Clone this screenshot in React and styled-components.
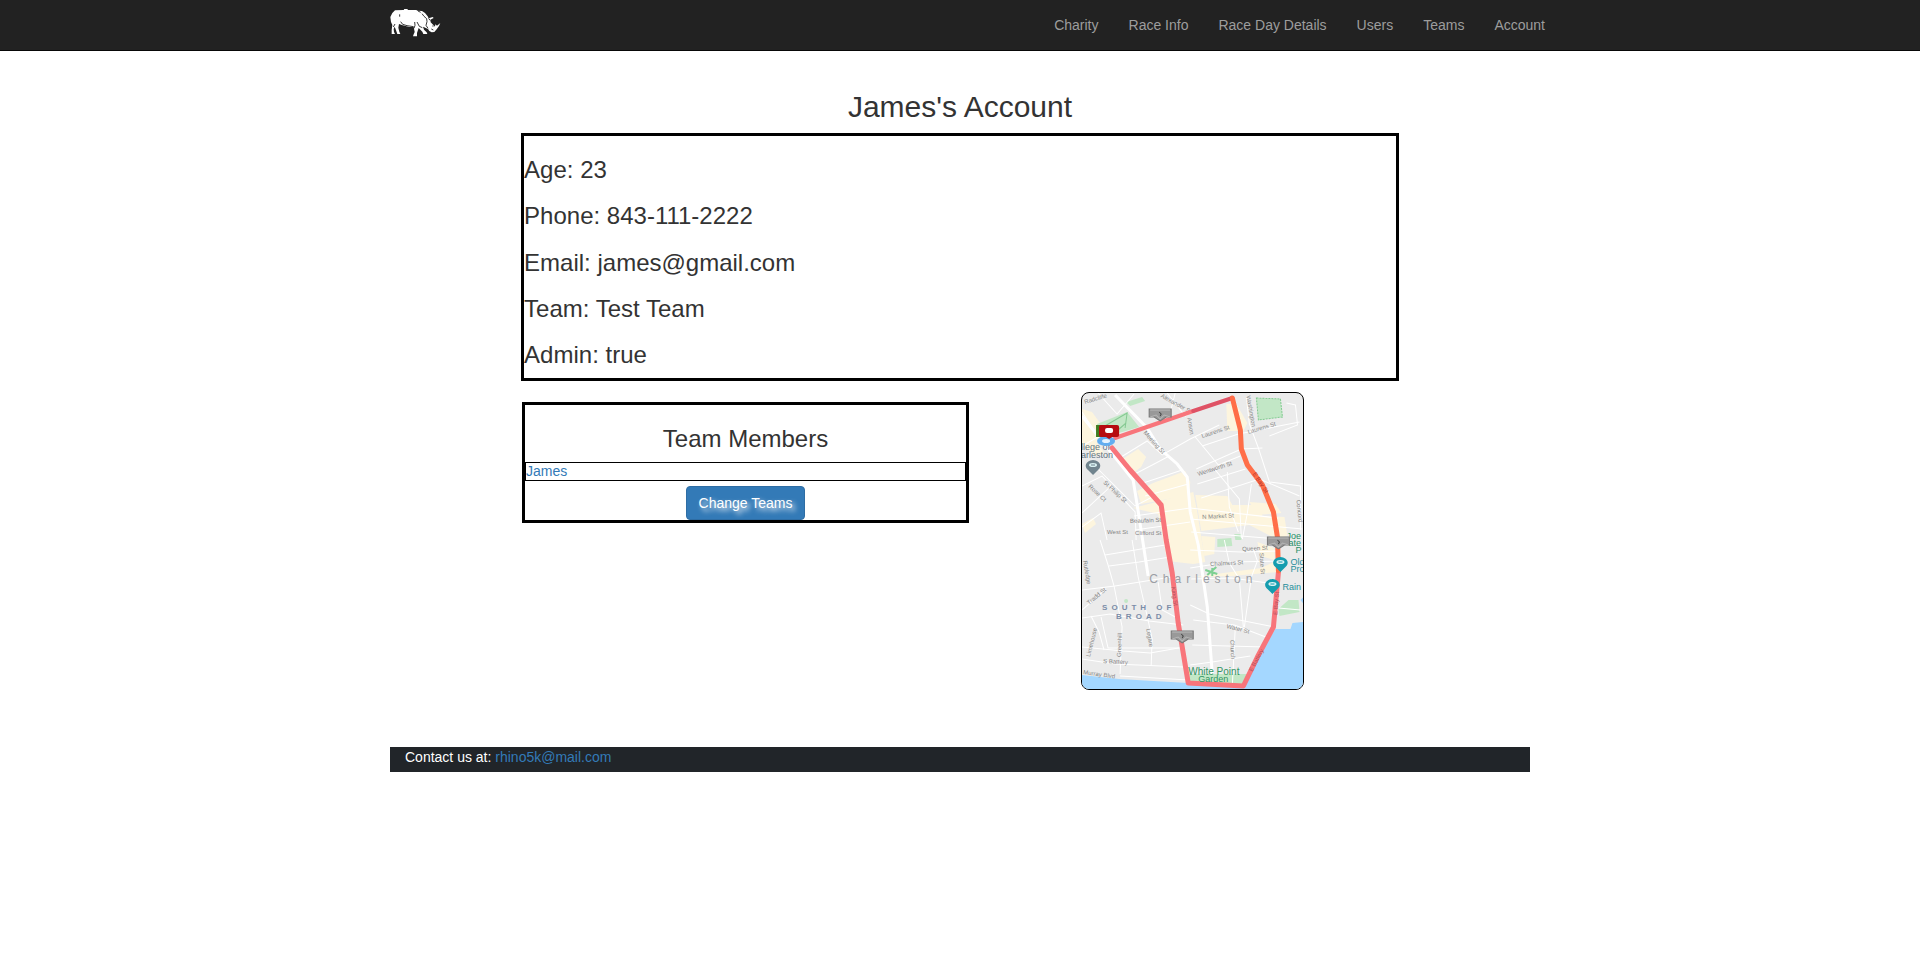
import React from "react";
import styled, { createGlobalStyle } from "styled-components";

const GlobalStyle = createGlobalStyle`
  *, *::before, *::after { box-sizing: border-box; }
  body {
    margin: 0;
    background: #fff;
    color: #333;
    font-family: "Helvetica Neue", "Liberation Sans", Arial, sans-serif;
    font-size: 14px;
    line-height: 20px;
  }
  a { color: #337ab7; text-decoration: none; }
  a:hover { text-decoration: underline; }
`;

const NavBar = styled.header`
  background: #222;
  border-bottom: 1px solid #080808;
`;

const Container = styled.div`
  max-width: 1170px;
  margin: 0 auto;
  padding: 0 15px;
`;

const NavInner = styled(Container)`
  display: flex;
  justify-content: space-between;
  align-items: flex-start;
`;

const Brand = styled.a`
  display: block;
  padding-top: 8px;
  svg { display: block; width: 51px; height: 30px; }
`;

const NavLinks = styled.nav`
  display: flex;
  margin-right: -30px;
`;

const NavLink = styled.a`
  padding: 15px;
  color: #9d9d9d;
  &:hover { color: #fff; text-decoration: none; }
`;

const Main = styled.main`
  padding-top: 39px;
`;

const PageTitle = styled.h1`
  margin: 0 0 10px;
  font-size: 30px;
  font-weight: 500;
  line-height: 33px;
  text-align: center;
`;

const Panel = styled.section`
  border: 3px solid #000;
`;

const DetailsPanel = styled(Panel)`
  display: flex;
  flex-direction: column;
  justify-content: space-between;
  width: 77%;
  min-height: 248px;
  margin: 0 auto;
  padding: 20px 0 10px;
`;

const Detail = styled.p`
  margin: 0;
  font-size: 24px;
  line-height: 27px;
`;

const Columns = styled.div`
  display: grid;
  grid-template-columns: repeat(2, minmax(0, 447px));
  align-items: start;
  margin: 11px 0 0 132px;
`;

const TeamPanel = styled(Panel)`
  display: flex;
  flex-direction: column;
  margin-top: 10px;
  padding-top: 20px;
`;

const PanelTitle = styled.h2`
  margin: 0 0 10px;
  font-size: 24px;
  font-weight: 500;
  line-height: 27px;
  text-align: center;
`;

const MemberList = styled.ul`
  margin: 0 0 5px;
  padding: 0;
  list-style: none;
`;

const Member = styled.li`
  border: 1px solid #000;
  line-height: 17px;
`;

const PrimaryButton = styled.button`
  align-self: center;
  padding: 6px 12px;
  border: 1px solid #2e6da4;
  border-radius: 4px;
  background: #337ab7;
  color: #fff;
  font: inherit;
  text-shadow: 3px 3px 5px #fff;
  cursor: pointer;
`;

const MapFrame = styled.svg`
  display: block;
  justify-self: center;
  width: 50%;
  aspect-ratio: 3 / 4;
  border: 1px solid #000;
  border-radius: 8px;
  background: #ebebeb;
`;

const StreetLabel = styled.text`
  fill: ${(p) => p.$color || "#858585"};
  font-size: 6px;
`;

const PlaceLabel = styled.text`
  fill: ${(p) => p.$color};
  font-size: ${(p) => p.$size}px;
  font-weight: ${(p) => (p.$bold ? 700 : 400)};
  letter-spacing: ${(p) => p.$tracking || 0}px;
`;

const Footer = styled.footer`
  margin-top: 57px;
  padding: 0 15px 5px;
  background: #212529;
  color: #fff;
`;

function Rhino() {
  return (
    <svg viewBox="29 24 153 90" role="img" aria-label="Rhino 5K">
      <path
        fill="#fff"
        d="M30 51L36 39L44 31L70 30L72 27H81L83 30H108L111 32L125 33L134 39L142 49L145 55L157 51L160 54L150 59L151 67L159 75L164 80L165 73L170 77L180 69L176 78L169 88L162 96L154 97L147 93L143 87L138 85L128 80L131 89L139 97L141 102H129L126 95L115 84L110 99L110 109H98L100 103L103 96L100 81L87 81L67 76L56 72L54 83L57 95L60 102H51L47 91L43 80L40 87L41 96L44 102H34V90L36 75L32 66Z"
      />
      <g fill="none" stroke="#111" strokeWidth="2.5">
        <path d="M58 43V50M61 65L67 73L80 77L100 80" />
        <path d="M103 66L104 76L101 85M110 66L117 79L126 83" />
        <path d="M125 41L131 49L139 56L140 65L137 76L143 85" />
        <path d="M145 55L149 61M156 78H160M153 87L159 90M44 72L39 81M113 33L121 37" />
      </g>
    </svg>
  );
}

const minorStreets = [
  "M1 54L15 46L34 39", "M1 20L17 44L26 53", "M17 1L36 22L53 2", "M40 65L66 49L81 63L109 47L138 33",
  "M66 36L88 25L94 1", "M86 1L104 24L114 18", "M1 94L21 84L54 120L55 148", "M14 74L54 114L73 104",
  "M50 84L73 72L88 64", "M59 92L101 78", "M64 104L107 92", "M1 135L20 121L26 148", "M1 121L30 94",
  "M53 124L109 116", "M54 138L109 130", "M114 45L137 73L159 64", "M121 54L157 42L218 30",
  "M115 77L160 57L181 56", "M116 92L164 77", "M120 106L178 87L218 104", "M109 116L196 126",
  "M109 127L221 137", "M110 140L196 147", "M146 80L148 115L157 140", "M134 78L158 107L160 146",
  "M170 92L166 121L161 147", "M165 5L168 32L177 56L188 90L219 94V138", "M188 44L216 33L214 13L205 11",
  "M19 148L27 173L33 194L41 235L39 282", "M51 148L57 185L66 224L71 247L70 274",
  "M24 163L54 158L84 153", "M28 174L58 170L89 165", "M1 198L34 194L90 185",
  "M1 218L25 197", "M1 226L29 222L68 229L102 233", "M10 224L18 240L23 258", "M20 225L27 256L98 256",
  "M1 255L42 259L69 261L103 255", "M1 267L34 272L103 275", "M39 284L107 288",
  "M77 190L81 218L96 226", "M109 158L160 160L196 159", "M109 176L147 170L197 169",
  "M110 187L150 186L194 192", "M143 148L148 171L158 187L162 235", "M172 157L176 169L170 185L163 235",
  "M112 228L153 233L187 246", "M111 253L183 255", "M109 213L128 222L193 235",
  "M154 234L151 294", "M109 273L131 270L169 264", "M197 216L219 218",
];

const avenues = [
  "M34 3L66 36L79 57L96 72L106 85L109 120L117 153L126 215L131 282",
  "M1 24L17 44L52 88L57 119L67 184",
];

const commercial = [
  "M1 17L11 20L27 42L16 51L24 62L14 64L1 53Z",
  "M40 68L57 57L65 65L60 75L48 84Z",
  "M56 99L72 91L104 79L109 90L108 103L60 112Z",
  "M52 116L79 109L112 100L116 120L124 170L112 172L86 169L77 122Z",
  "M1 132L12 126L15 132L4 141Z",
  "M145 12H155L166 31L162 39H146Z",
  "M114 103L146 104L151 113L178 113L181 124L203 125L206 144L195 147L168 133L120 139Z",
  "M120 144L134 145L133 162L123 164Z",
  "M112 185L180 176L196 168V180L150 184Z",
  "M176 150L193 156V168L179 164Z",
  "M168 110L194 112L200 121L176 123Z",
];

function Shield({ x, y }) {
  return (
    <g transform={`translate(${x} ${y})`}>
      <path d="M-11 -5H11V3H6L0 7L-6 3H-11Z" fill="#999" stroke="#777" />
      <path d="M-10 -4H10" stroke="#bbb" />
      <path d="M-10 3L-4 1L0 5L4 1L10 3" fill="none" stroke="#b5b5b5" />
      <path d="M-1 -2L1 0L0 2" fill="none" stroke="#444" />
    </g>
  );
}

function Pin({ x, y, color }) {
  return (
    <g transform={`translate(${x} ${y})`}>
      <path d="M0 9L-5 4C-9 1 -8 -5 0 -6C8 -5 9 1 5 4Z" fill={color} />
      <ellipse cy="-1" rx="4" ry="2" fill="#d9f1f2" />
      <path d="M-2 -1H2" stroke={color} />
    </g>
  );
}

function RaceMap() {
  return (
    <MapFrame viewBox="1 1 221 296" preserveAspectRatio="none" role="img" aria-label="Race route through Charleston">
      <g fill="#fdf5de">{commercial.map((d) => <path key={d} d={d} />)}</g>
      <path d="M1 283L38 287L107 291L162 294L176 265L194 237H209L211 231L222 230V298H1Z" fill="#a4d7ff" />
      <path d="M222 205L219 208L222 212Z" fill="#a4d7ff" />
      <g fill="#c2e7c6">
        <path d="M16 32L46 20L58 35L31 43L17 43Z" />
        <path d="M45 10L61 5L64 9L49 14Z" />
        <path d="M175 6L199 7L201 25L177 28Z" stroke="#82ca91" strokeDasharray="2 1" />
        <path d="M136 147L150 146L151 154L136 155Z" />
        <path d="M153 142L160 142V148L154 148Z" />
        <path d="M207 208L217 208L218 220L198 224L197 217Z" />
        <path d="M108 282H166L163 293L107 290Z" />
        <circle cx="45" cy="209" r="2" />
      </g>
      <path d="M17 38L46 21L44 36M31 43L45 31" fill="none" stroke="#85c992" />
      <g fill="none" stroke="#fff">{minorStreets.map((d) => <path key={d} d={d} />)}</g>
      <g fill="none" stroke="#fff" strokeWidth="3">{avenues.map((d) => <path key={d} d={d} />)}</g>
      <path d="M124 178L136 182M126 183L135 175M131 176V184" stroke="#7fd093" strokeWidth="2" />

      <StreetLabel transform="translate(4 12) rotate(-17)">Radcliffe</StreetLabel>
      <StreetLabel transform="translate(79 5) rotate(29)">Alexander St</StreetLabel>
      <StreetLabel transform="translate(62 41) rotate(48)">Meeting St</StreetLabel>
      <StreetLabel transform="translate(22 91) rotate(43)">St Philip St</StreetLabel>
      <StreetLabel transform="translate(7 95) rotate(43)">Rose Ct</StreetLabel>
      <StreetLabel transform="translate(49 131) rotate(-2)">Beaufain St</StreetLabel>
      <StreetLabel transform="translate(26 142)">West St</StreetLabel>
      <StreetLabel transform="translate(54 143)">Clifford St</StreetLabel>
      <StreetLabel transform="translate(121 46) rotate(-18)">Laurens St</StreetLabel>
      <StreetLabel transform="translate(167 42) rotate(-17)">Laurens St</StreetLabel>
      <StreetLabel transform="translate(165 4) rotate(80)">Washington</StreetLabel>
      <StreetLabel transform="translate(106 26) rotate(80)">Anson</StreetLabel>
      <StreetLabel transform="translate(117 84) rotate(-18)">Wentworth St</StreetLabel>
      <StreetLabel transform="translate(121 127) rotate(-3)">N Market St</StreetLabel>
      <StreetLabel transform="translate(215 108) rotate(85)">Concord</StreetLabel>
      <StreetLabel transform="translate(161 159) rotate(-3)">Queen St</StreetLabel>
      <StreetLabel transform="translate(129 174) rotate(-3)">Chalmers St</StreetLabel>
      <StreetLabel transform="translate(178 161) rotate(86)">State St</StreetLabel>
      <StreetLabel transform="translate(2 169) rotate(80)">Rutledge</StreetLabel>
      <StreetLabel transform="translate(8 213) rotate(-40)">Tradd St</StreetLabel>
      <StreetLabel transform="translate(9 265) rotate(-76)">Limehouse</StreetLabel>
      <StreetLabel transform="translate(40 265) rotate(-88)">Greenhill</StreetLabel>
      <StreetLabel transform="translate(65 237) rotate(80)">Legare</StreetLabel>
      <StreetLabel transform="translate(22 271) rotate(3)">S Battery</StreetLabel>
      <StreetLabel transform="translate(2 282) rotate(8)">Murray Blvd</StreetLabel>
      <StreetLabel transform="translate(145 236) rotate(14)">Water St</StreetLabel>
      <StreetLabel transform="translate(149 248) rotate(88)">Church</StreetLabel>

      <g fill="none" strokeWidth="5" strokeLinejoin="round" strokeLinecap="round">
        <path d="M31 56L49 78L80 113L85 148L91 181L97 231L107 291L162 294L176 265L192 235L197 180" stroke="#f8757b" />
        <path d="M34 46L112 19" stroke="#f8757b" strokeWidth="4" />
        <path d="M112 19L151 6" stroke="#df5265" strokeWidth="4" />
        <path d="M151 6L159 38L160 57L166 73L181 93L192 120L196 145L197 179" stroke="#ff6e48" />
      </g>
      <StreetLabel transform="translate(171 82) rotate(56)" $color="#b7352b">E Bay St</StreetLabel>
      <StreetLabel transform="translate(196 223) rotate(-86)" $color="#b3525d">E Bay St</StreetLabel>
      <StreetLabel transform="translate(90 195) rotate(82)" $color="#b3525d">King St</StreetLabel>
      <StreetLabel transform="translate(171 280) rotate(-62)" $color="#b3525d">E Battery</StreetLabel>

      <PlaceLabel x="0" y="58" $size="9" $color="#647584">llege of</PlaceLabel>
      <PlaceLabel x="0" y="66" $size="9" $color="#647584">arleston</PlaceLabel>
      <PlaceLabel x="68" y="191" $size="12" $color="#9b9ea5" $tracking={5}>Charleston</PlaceLabel>
      <PlaceLabel x="21" y="218" $size="8" $color="#7b8da8" $bold $tracking={4}>SOUTH OF</PlaceLabel>
      <PlaceLabel x="35" y="227" $size="8" $color="#7b8da8" $bold $tracking={4}>BROAD</PlaceLabel>
      <PlaceLabel x="107" y="283" $size="10" $color="#329563">White Point</PlaceLabel>
      <PlaceLabel x="117" y="290" $size="9" $color="#329563">Garden</PlaceLabel>
      <PlaceLabel x="205" y="147" $size="9" $color="#239168">Joe</PlaceLabel>
      <PlaceLabel x="207" y="154" $size="9" $color="#239168">ate</PlaceLabel>
      <PlaceLabel x="214" y="161" $size="9" $color="#239168">P</PlaceLabel>
      <PlaceLabel x="209" y="173" $size="9" $color="#248e9b">Old</PlaceLabel>
      <PlaceLabel x="209" y="180" $size="9" $color="#248e9b">Pro</PlaceLabel>
      <PlaceLabel x="201" y="198" $size="9" $color="#248e9b">Rain</PlaceLabel>

      <Pin x={12} y={74} color="#71848e" />
      <Pin x={199} y={171} color="#159daf" />
      <Pin x={191} y={193} color="#159daf" />
      <Shield x={79} y={22} />
      <Shield x={197} y={150} />
      <Shield x={101} y={244} />
      <ellipse cx="25" cy="49" rx="9" ry="5" fill="#62adf0" />
      <ellipse cx="25" cy="49" rx="4" ry="2" fill="#e6f3ff" />
      <path d="M15 33H20V45H15Z" fill="#427d22" />
      <rect x="18" y="33" width="20" height="12" rx="2" fill="#b60c10" />
      <path d="M22 43L28 47L34 43Z" fill="#b60c10" />
      <rect x="24" y="36" width="8" height="5" rx="2" fill="#fff" />
    </MapFrame>
  );
}

const links = ["Charity", "Race Info", "Race Day Details", "Users", "Teams", "Account"];

const details = [
  ["Age", "23"],
  ["Phone", "843-111-2222"],
  ["Email", "james@gmail.com"],
  ["Team", "Test Team"],
  ["Admin", "true"],
];

export default function App() {
  return (
    <>
      <GlobalStyle />
      <NavBar>
        <NavInner>
          <Brand href="#home"><Rhino /></Brand>
          <NavLinks>
            {links.map((label) => (
              <NavLink key={label} href={`#${label.toLowerCase().replace(/ /g, "-")}`}>{label}</NavLink>
            ))}
          </NavLinks>
        </NavInner>
      </NavBar>
      <Container>
        <Main>
          <PageTitle>James's Account</PageTitle>
          <DetailsPanel>
            {details.map(([name, value]) => (
              <Detail key={name}>{name}: {value}</Detail>
            ))}
          </DetailsPanel>
          <Columns>
            <TeamPanel>
              <PanelTitle>Team Members</PanelTitle>
              <MemberList>
                <Member><a href="#james">James</a></Member>
              </MemberList>
              <PrimaryButton type="button">Change Teams</PrimaryButton>
            </TeamPanel>
            <RaceMap />
          </Columns>
        </Main>
        <Footer>
          Contact us at: <a href="mailto:rhino5k@mail.com">rhino5k@mail.com</a>
        </Footer>
      </Container>
    </>
  );
}
